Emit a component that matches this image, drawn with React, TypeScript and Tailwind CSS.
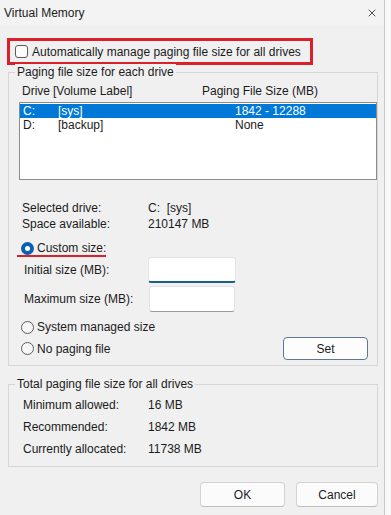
import { X } from "lucide-react";

const Radio = ({ checked = false }: { checked?: boolean }) =>
  checked ? (
    <span className="w-[13px] h-[13px] rounded-full bg-[#0b5fb3] flex items-center justify-center shrink-0">
      <span className="w-[5px] h-[5px] rounded-full bg-white" />
    </span>
  ) : (
    <span className="w-[13px] h-[13px] rounded-full border border-[#5c5c5c] bg-[#f6f6f6] shrink-0" />
  );

const GroupLabel = ({ children }: { children: string }) => (
  <div className="-mt-[9px] ml-[6px] px-[2px] w-fit h-[16px] leading-[16px] bg-[#f0f0f0]">
    {children}
  </div>
);

const totals = [
  { label: "Minimum allowed:", value: "16 MB" },
  { label: "Recommended:", value: "1842 MB" },
  { label: "Currently allocated:", value: "11738 MB" },
];

export default function App() {
  return (
    <div className="w-[391px] h-[515px] flex bg-[#f8f8f8] font-['Liberation_Sans',Arial,sans-serif] text-[12px] text-[#1b1b1b]">
      <div className="w-[385px] h-full flex flex-col bg-[#f0f0f0] border-r border-[#c8c8c8]">
        {/* Title bar */}
        <div className="h-[26px] flex items-center justify-between pl-[4px] pr-[6px] bg-[#f3f3f3]">
          <span className="leading-[16px]">Virtual Memory</span>
          <X className="w-[12px] h-[12px] text-[#222]" strokeWidth={1.6} />
        </div>

        <div className="flex flex-col pl-[7px]">
          {/* Auto manage checkbox, highlighted */}
          <div className="mt-[12px] w-[306px] h-[27px] border-[3px] border-[#d8212a] flex items-center pl-[5px] gap-[4px]">
            <span className="w-[13px] h-[13px] rounded-[3px] border border-[#5c5c5c] bg-[#fbfbfb]" />
            <span>Automatically manage paging file size for all drives</span>
          </div>

          {/* Paging file size for each drive */}
          <div className="mt-[7px] ml-[1px] w-[370px] flex flex-col border border-[#d6d6d6] pb-[5px]">
            <GroupLabel>Paging file size for each drive</GroupLabel>
            <div className="mt-[3px] h-[16px] leading-[16px] pl-[13px] flex">
              <span className="w-[31px]">Drive</span>
              <span className="w-[149px]">[Volume Label]</span>
              <span>Paging File Size (MB)</span>
            </div>
            <div className="mt-[3px] ml-[10px] w-[358px] h-[78px] border border-[#8c8c8c] bg-white pt-[1px]">
              <div className="h-[14px] leading-[14px] flex pl-[3px] bg-[#0078d7] text-white">
                <span className="w-[35px]">C:</span>
                <span className="w-[177px]">[sys]</span>
                <span>1842 - 12288</span>
              </div>
              <div className="h-[14px] leading-[14px] flex pl-[3px]">
                <span className="w-[35px]">D:</span>
                <span className="w-[177px]">[backup]</span>
                <span>None</span>
              </div>
            </div>

            <div className="mt-[20px] pl-[13px] flex h-[16px] leading-[16px]">
              <span className="w-[126px]">Selected drive:</span>
              <span>C:&nbsp;&nbsp;[sys]</span>
            </div>
            <div className="pl-[13px] flex h-[16px] leading-[16px]">
              <span className="w-[126px]">Space available:</span>
              <span>210147 MB</span>
            </div>

            <div className="mt-[10px] ml-[8px] w-fit h-[15px] flex items-center gap-[3px] pl-[4px] border-b-2 border-[#d8212a]">
              <Radio checked />
              <span className="leading-[13px]">Custom size:</span>
            </div>

            <div className="h-[26px] flex items-center pl-[15px]">
              <span className="w-[124px]">Initial size (MB):</span>
              <div className="w-[88px] h-[26px] bg-white rounded-[3px] border border-[#e3e3e3] border-b-2 border-b-[#1a5f8a]" />
            </div>
            <div className="mt-[3px] h-[26px] flex items-center pl-[15px]">
              <span className="w-[125px]">Maximum size (MB):</span>
              <div className="w-[86px] h-[26px] bg-white rounded-[3px] border border-[#e3e3e3] border-b-[#9a9a9a]" />
            </div>

            <div className="mt-[6px] h-[18px] flex items-center gap-[3px] pl-[12px]">
              <Radio />
              <span>System managed size</span>
            </div>
            <div className="mt-[1px] h-[23px] flex items-center justify-between pl-[12px] pr-[9px]">
              <div className="flex items-center gap-[3px]">
                <Radio />
                <span>No paging file</span>
              </div>
              <button className="w-[85px] h-[23px] rounded-[4px] border border-[#5b7896] bg-[#fdfdfd]">
                Set
              </button>
            </div>
          </div>

          {/* Totals */}
          <div className="mt-[18px] ml-[1px] w-[370px] flex flex-col border border-[#d6d6d6] pb-[6px]">
            <GroupLabel>Total paging file size for all drives</GroupLabel>
            <div className="mt-[2px] flex flex-col">
              {totals.map((t) => (
                <div key={t.label} className="h-[22px] flex items-center pl-[14px]">
                  <span className="w-[125px]">{t.label}</span>
                  <span>{t.value}</span>
                </div>
              ))}
            </div>
          </div>
        </div>

        {/* Dialog buttons */}
        <div className="mt-[15px] flex justify-end gap-[11px] pr-[6px]">
          <button className="w-[85px] h-[25px] rounded-[4px] border border-[#d2d2d2] border-b-[#bdbdbd] bg-[#fbfbfb]">
            OK
          </button>
          <button className="w-[82px] h-[25px] rounded-[4px] border border-[#d2d2d2] border-b-[#bdbdbd] bg-[#fbfbfb]">
            Cancel
          </button>
        </div>
      </div>
    </div>
  );
}
